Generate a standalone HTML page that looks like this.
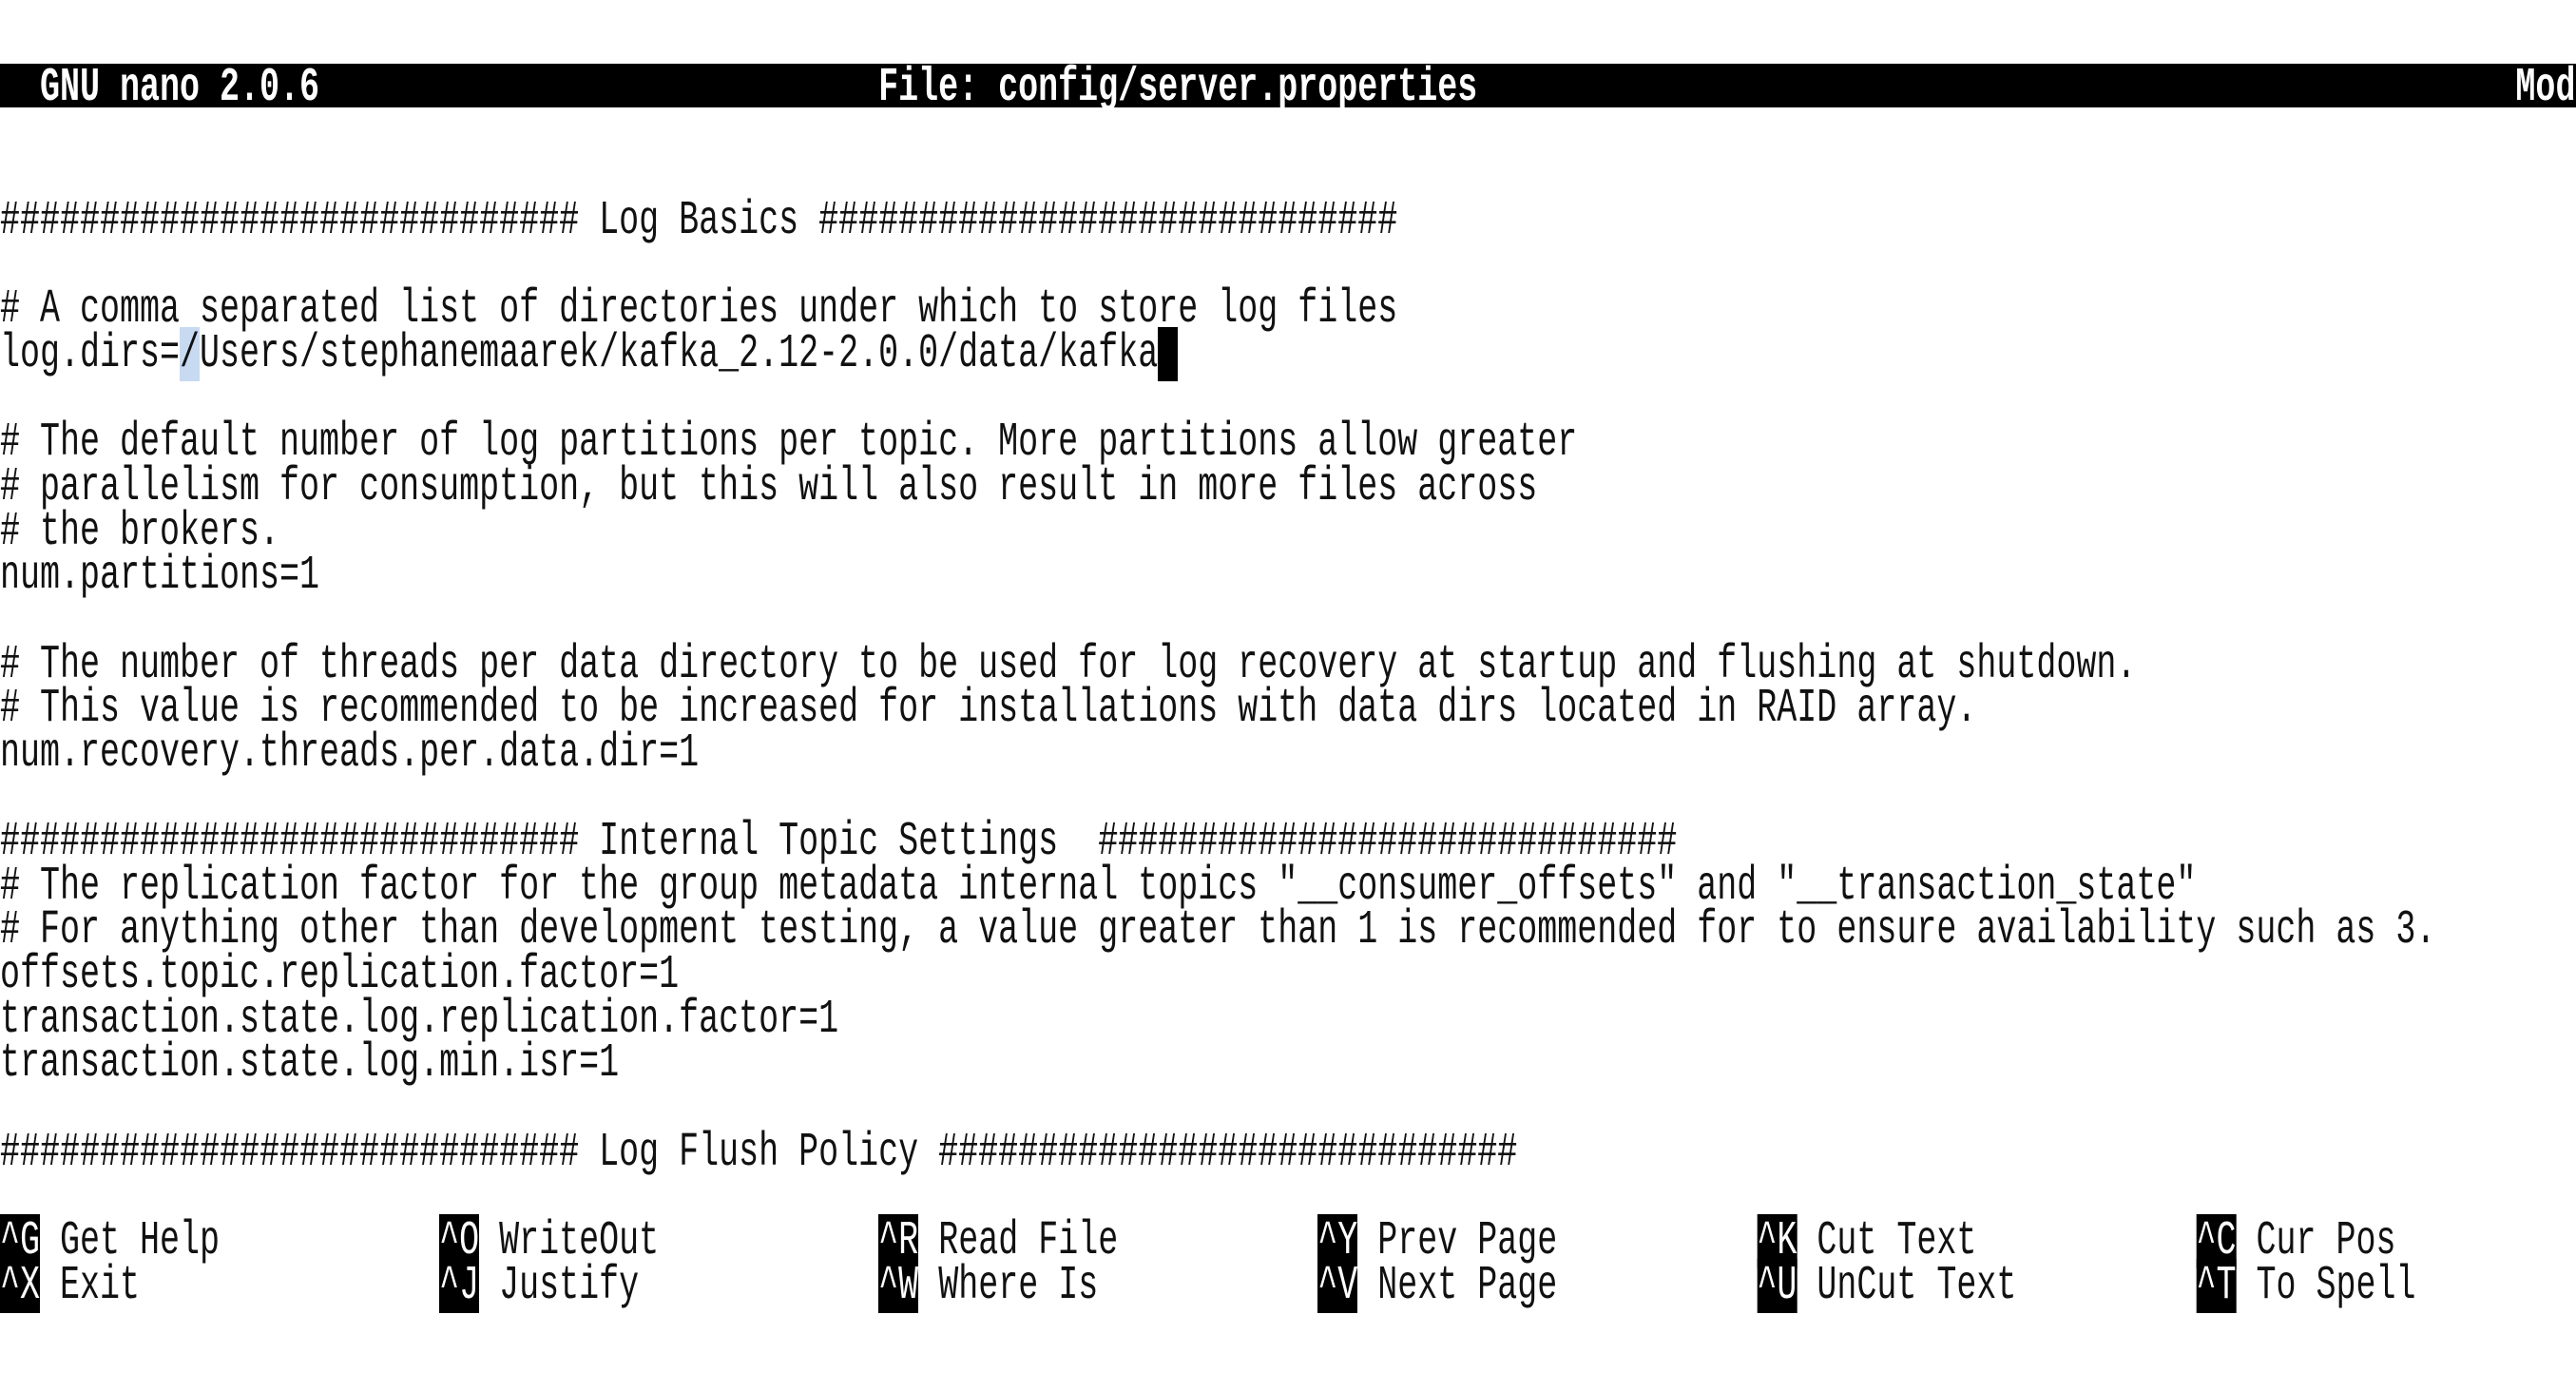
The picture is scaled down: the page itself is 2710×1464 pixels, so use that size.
<!DOCTYPE html>
<html><head><meta charset="utf-8"><style>
html,body{margin:0;padding:0;background:#fff;width:2710px;height:1464px;overflow:hidden}
.t{position:absolute;left:0;top:70px;margin:0;font-family:"Liberation Mono",monospace;font-size:50px;line-height:46.66px;color:#111;transform:scaleX(0.7);transform-origin:0 0;white-space:pre}
.bar{position:absolute;left:0;top:67px;width:2710px;height:46px;background:#000}
.w{color:#fff;font-weight:bold}
.k{background:#000;color:#fff}
.hl{background:#c7daf2}
.cur{background:#000}
</style></head><body>
<div class="bar"></div>
<pre class="t"><span class="w">  GNU nano 2.0.6                            File: config/server.properties                                                    Mod</span>


############################# Log Basics #############################

# A comma separated list of directories under which to store log files
log.dirs=<span class="hl">/</span>Users/stephanemaarek/kafka_2.12-2.0.0/data/kafka<span class="cur"> </span>

# The default number of log partitions per topic. More partitions allow greater
# parallelism for consumption, but this will also result in more files across
# the brokers.
num.partitions=1

# The number of threads per data directory to be used for log recovery at startup and flushing at shutdown.
# This value is recommended to be increased for installations with data dirs located in RAID array.
num.recovery.threads.per.data.dir=1

############################# Internal Topic Settings  #############################
# The replication factor for the group metadata internal topics "__consumer_offsets" and "__transaction_state"
# For anything other than development testing, a value greater than 1 is recommended for to ensure availability such as 3.
offsets.topic.replication.factor=1
transaction.state.log.replication.factor=1
transaction.state.log.min.isr=1

############################# Log Flush Policy #############################

<span class="k">^G</span> Get Help           <span class="k">^O</span> WriteOut           <span class="k">^R</span> Read File          <span class="k">^Y</span> Prev Page          <span class="k">^K</span> Cut Text           <span class="k">^C</span> Cur Pos
<span class="k">^X</span> Exit               <span class="k">^J</span> Justify            <span class="k">^W</span> Where Is           <span class="k">^V</span> Next Page          <span class="k">^U</span> UnCut Text         <span class="k">^T</span> To Spell</pre>
</body></html>
